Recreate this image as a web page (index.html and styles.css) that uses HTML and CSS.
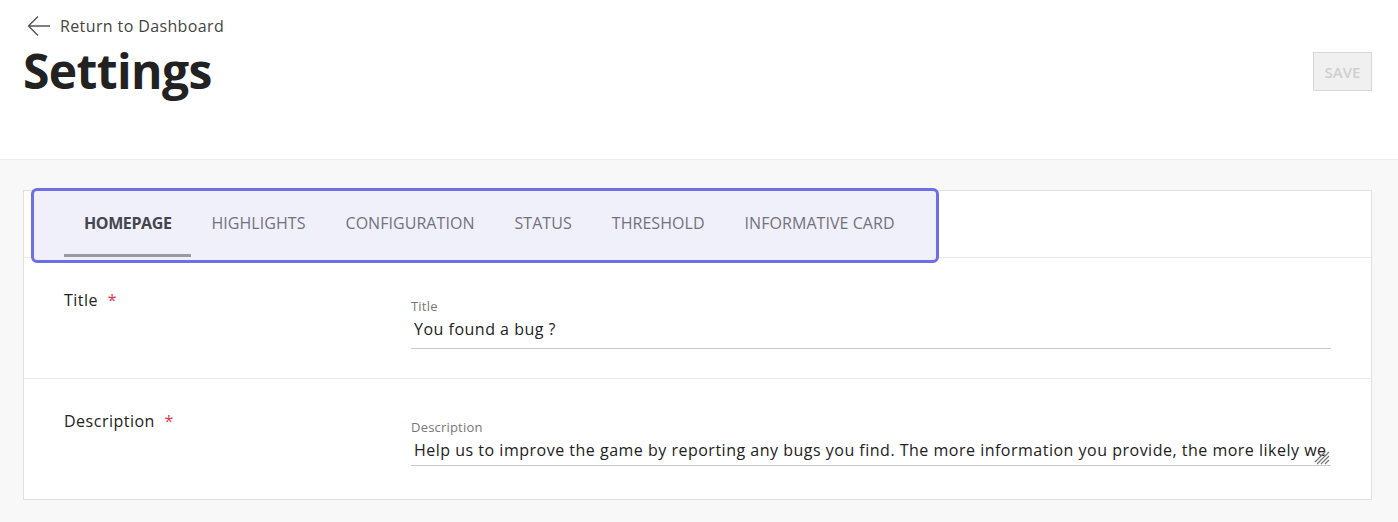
FILE: index.html
```html
<!DOCTYPE html>
<html>
<head>
<meta charset="utf-8">
<link rel="stylesheet" href="styles.css">
</head>
<body>
<header class="page-header">
  <a class="back-link" href="#">
    <svg class="back-icon" width="24" height="22" viewBox="0 0 24 22"><path d="M23 11H2M11 1.5L1.5 11L11 20.5" fill="none" stroke="#555" stroke-width="1.4"/></svg>
    <span>Return to Dashboard</span>
  </a>
  <div class="title-row">
    <h1 class="page-title">Settings</h1>
    <button class="save-btn" disabled>SAVE</button>
  </div>
</header>
<main class="content">
  <section class="card">
    <nav class="tabs-wrap">
      <div class="tabs">
        <div class="tab active">HOMEPAGE</div>
        <div class="tab">HIGHLIGHTS</div>
        <div class="tab">CONFIGURATION</div>
        <div class="tab">STATUS</div>
        <div class="tab">THRESHOLD</div>
        <div class="tab">INFORMATIVE CARD</div>
      </div>
    </nav>
    <div class="row">
      <div class="row-label">Title <span class="req">*</span></div>
      <div class="field">
        <label class="field-label">Title</label>
        <input class="field-input" type="text" value="You found a bug ?">
      </div>
    </div>
    <div class="row">
      <div class="row-label">Description <span class="req">*</span></div>
      <div class="field field-desc">
        <label class="field-label">Description</label>
        <div class="area-wrap">
          <textarea class="field-input field-area" rows="1">Help us to improve the game by reporting any bugs you find. The more information you provide, the more likely we are to be able to fix it quickly.</textarea>
          <svg class="grip" width="16" height="16" viewBox="0 0 16 16"><path d="M15 3L3 15M15 7L7 15M15 11L11 15M11 3L1 13" stroke="#777" stroke-width="1.2" fill="none"/></svg>
        </div>
      </div>
    </div>
  </section>
</main>
</body>
</html>
```
FILE: styles.css
```css
* { box-sizing: border-box; }
html, body { margin: 0; padding: 0; }
body {
  font-family: "Open Sans", "Noto Sans", sans-serif;
  background: #f8f8f8;
  color: #222;
  width: 1398px;
  height: 522px;
  overflow: hidden;
}
.page-header {
  background: #fff;
  height: 160px;
  border-bottom: 1px solid #ececec;
  padding: 13px 26px 0 23px;
}
.back-link {
  display: flex;
  align-items: center;
  gap: 9px;
  color: #444;
  text-decoration: none;
  font-size: 16px;
  letter-spacing: 0.38px;
  margin-left: 4px;
  height: 26px;
}
.back-icon { display: block; }
.title-row {
  display: flex;
  justify-content: space-between;
  align-items: flex-start;
}
.page-title {
  margin: 0;
  font-size: 48px;
  font-weight: 700;
  color: #222;
  letter-spacing: -0.6px;
  line-height: 64px;
}
.save-btn {
  margin-top: 13px;
  width: 59px;
  height: 39px;
  background: #f0f0f0;
  border: 1px solid #d8d8d8;
  color: #cfcfcf;
  font-family: inherit;
  font-size: 15px;
  font-weight: 600;
  padding: 0;
}
.content {
  padding: 30px 26px 0 23px;
}
.card {
  background: #fff;
  border: 1px solid #e0e0e0;
  height: 310px;
}
.tabs-wrap {
  height: 67px;
  border-bottom: 1px solid #ececec;
  padding: 0 0 0 7px;
  display: flex;
}
.tabs {
  margin-top: -3px;
  height: 75px;
  width: 908px;
  border: 3px solid #6e6ee6;
  border-radius: 6px;
  background: #f0f0fb;
  display: flex;
  padding-left: 30px;
  align-items: stretch;
}
.tab {
  padding: 0 20px;
  font-size: 16px;
  letter-spacing: 0.05px;
  color: #72727c;
  display: flex;
  align-items: center;
  height: 66px;
  border-bottom: 3px solid transparent;
}
.tab.active {
  font-weight: 700;
  color: #45454f;
  letter-spacing: -0.4px;
  border-bottom-color: #9a9aa2;
}
.row {
  display: flex;
  height: 121px;
  border-bottom: 1px solid #ececec;
  padding: 31px 40px 0 40px;
}
.row:last-child { border-bottom: none; }
.row-label {
  width: 347px;
  font-size: 16px;
  letter-spacing: 0.5px;
  color: #222;
}
.req { color: #e0354a; margin-left: 5px; }
.field {
  flex: 1;
  display: flex;
  flex-direction: column;
  padding-top: 9px;
}
.field-desc { padding-top: 9px; }
.field-label {
  font-size: 13px;
  letter-spacing: 0.2px;
  color: #777;
  line-height: 17px;
}
.field-input {
  border: none;
  border-bottom: 1px solid #c8c8c8;
  font-family: inherit;
  font-size: 16px;
  letter-spacing: 0.5px;
  color: #222;
  padding: 3px 3px 8px 3px;
  line-height: 22px;
  outline: none;
  background: transparent;
}
.area-wrap {
  position: relative;
  display: flex;
  flex-direction: column;
}
.field-area {
  height: 30px;
  padding: 3px 3px 5px 3px;
  resize: none;
  overflow: hidden;
}
.grip {
  position: absolute;
  right: 1px;
  bottom: 1px;
}
```
